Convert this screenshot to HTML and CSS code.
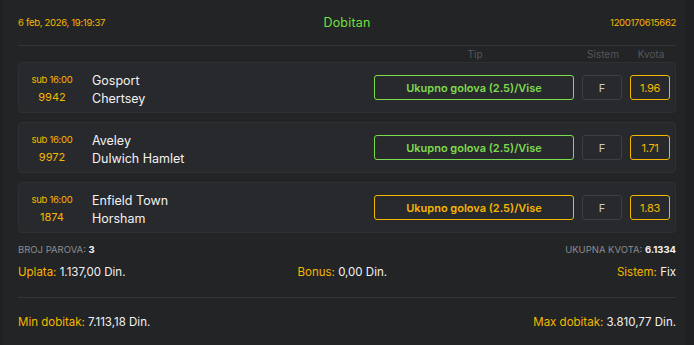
FILE: index.html
```html
<!DOCTYPE html>
<html lang="sr">

<head>
    <meta charset="UTF-8">
    <meta name="viewport" content="width=device-width, initial-scale=1.0">
    <title>Tiket</title>
    <link rel="stylesheet" href="styles.css">
</head>

<body>
    <div class="ticket">
        <div class="ticket-header">
            <span class="ticket-date">6 feb, 2026, 19:19:37</span>
            <span class="ticket-status">Dobitan</span>
            <span class="ticket-id">1200170615662</span>
        </div>

        <div class="col-heads">
            <span class="head-tip">Tip</span>
            <span class="head-sys">Sistem</span>
            <span class="head-odd">Kvota</span>
        </div>

        <div class="pairs">
            <div class="pair">
                <div class="pair-time">
                    <span class="day">sub 16:00</span>
                    <span class="code">9942</span>
                </div>
                <div class="pair-teams">
                    <span>Gosport</span>
                    <span>Chertsey</span>
                </div>
                <div class="tip won">Ukupno golova (2.5)/Vise</div>
                <div class="sys">F</div>
                <div class="odd">1.96</div>
            </div>
            <div class="pair">
                <div class="pair-time">
                    <span class="day">sub 16:00</span>
                    <span class="code">9972</span>
                </div>
                <div class="pair-teams">
                    <span>Aveley</span>
                    <span>Dulwich Hamlet</span>
                </div>
                <div class="tip won">Ukupno golova (2.5)/Vise</div>
                <div class="sys">F</div>
                <div class="odd">1.71</div>
            </div>
            <div class="pair">
                <div class="pair-time">
                    <span class="day">sub 16:00</span>
                    <span class="code">1874</span>
                </div>
                <div class="pair-teams">
                    <span>Enfield Town</span>
                    <span>Horsham</span>
                </div>
                <div class="tip pending">Ukupno golova (2.5)/Vise</div>
                <div class="sys">F</div>
                <div class="odd">1.83</div>
            </div>
        </div>

        <div class="summary">
            <div class="count-row">
                <span>Broj parova: <b>3</b></span>
                <span>Ukupna kvota: <b>6.1334</b></span>
            </div>
            <div class="money-row">
                <span><em>Uplata:</em> 1.137,00 Din.</span>
                <span class="bonus"><em>Bonus:</em> 0,00 Din.</span>
                <span><em>Sistem:</em> Fix</span>
            </div>
            <div class="win-row">
                <span><em>Min dobitak:</em> 7.113,18 Din.</span>
                <span><em>Max dobitak:</em> 3.810,77 Din.</span>
            </div>
        </div>
    </div>
</body>

</html>
```

FILE: styles.css
```css
* {
    box-sizing: border-box;
}

body {
    margin: 0;
    background-color: #1f2022;
    font-family: Inter, "Noto Sans", sans-serif;
    color: #f2f2f2;
}

.ticket {
    width: 684px;
    height: 345px;
    margin-left: 2px;
    padding: 0 10px 0 16px;
    background-color: #232426;
}

.ticket-header {
    display: flex;
    justify-content: space-between;
    align-items: center;
    height: 46px;
    border-bottom: 1px solid #343538;
    font-size: 9.5px;
    letter-spacing: -0.3px;
}

.ticket-date,
.ticket-id {
    color: #f5b700;
    width: 120px;
}

.ticket-id {
    text-align: right;
}

.ticket-status {
    color: #6fe03e;
    font-size: 12.5px;
    letter-spacing: 0.2px;
}

.col-heads {
    display: flex;
    height: 16px;
    align-items: center;
    color: #55575b;
    font-size: 10px;
}

.head-tip {
    width: 200px;
    margin-left: 357px;
    text-align: center;
}

.head-sys {
    width: 40px;
    margin-left: 8px;
    text-align: center;
}

.head-odd {
    width: 40px;
    margin-left: 8px;
    text-align: center;
}

.pairs {
    display: flex;
    flex-direction: column;
    gap: 9px;
}

.pair {
    display: flex;
    align-items: center;
    height: 51px;
    padding-right: 5px;
    background-color: #28292c;
    border: 1px solid #2f3033;
    border-radius: 4px;
}

.pair-time {
    display: flex;
    flex-direction: column;
    align-items: center;
    gap: 5px;
    width: 66px;
    padding-top: 3px;
    color: #f5b700;
}

.pair-time .day {
    font-size: 9.5px;
    letter-spacing: -0.3px;
}

.pair-time .code {
    font-size: 11px;
}

.pair-teams {
    display: flex;
    flex-direction: column;
    gap: 3px;
    flex: 1;
    margin-left: 7px;
    padding-top: 3px;
    font-size: 12.5px;
}

.tip,
.sys,
.odd {
    display: flex;
    align-items: center;
    justify-content: center;
    height: 25px;
    border-radius: 3px;
    font-size: 11px;
}

.tip {
    width: 200px;
    margin-left: 1px;
    font-weight: 600;
}

.tip.won {
    color: #7ddc4e;
    border: 1px solid #7ddc4e;
}

.tip.pending {
    color: #f5b700;
    border: 1px solid #f5b700;
}

.sys {
    width: 40px;
    margin-left: 8px;
    border: 1px solid #3e3f43;
    color: #c9c9c9;
}

.odd {
    width: 40px;
    margin-left: 8px;
    border: 1px solid #f5b700;
    color: #f5b700;
    letter-spacing: -0.3px;
}

.summary {
    font-size: 11.5px;
}

.summary em {
    font-style: normal;
    color: #f5b700;
}

.count-row,
.money-row,
.win-row {
    display: flex;
    justify-content: space-between;
    align-items: center;
}

.count-row {
    height: 32px;
    padding-top: 1px;
    color: #8b8d91;
    font-size: 9.5px;
    text-transform: uppercase;
}

.count-row b {
    color: #f2f2f2;
}

.money-row {
    height: 33px;
    align-items: flex-start;
    border-bottom: 1px solid #343538;
    line-height: 14px;
}

.bonus {
    margin-left: 172px;
    margin-right: auto;
}

.win-row {
    height: 48px;
}
```
